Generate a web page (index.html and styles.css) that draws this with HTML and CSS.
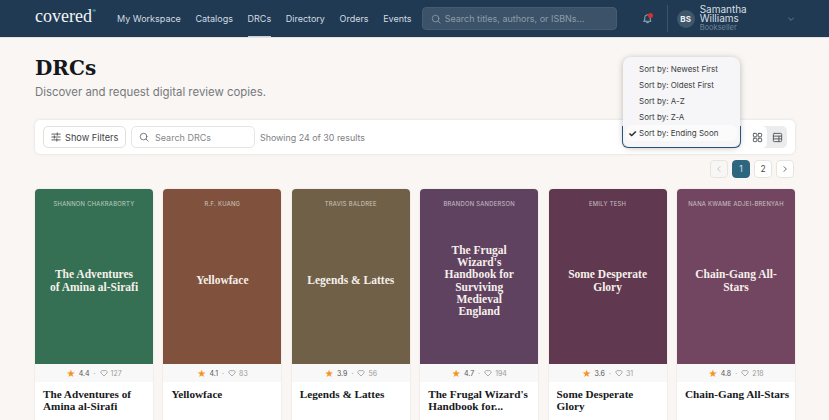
FILE: index.html
```html
<!DOCTYPE html>
<html lang="en">
<head>
<meta charset="utf-8">
<title>DRCs</title>
<link rel="stylesheet" href="styles.css">
</head>
<body>
<header class="topbar">
  <div class="logo">covered<span class="logo-mark">*</span></div>
  <nav class="nav">
    <a class="nav-item">My Workspace</a>
    <a class="nav-item">Catalogs</a>
    <a class="nav-item active">DRCs</a>
    <a class="nav-item">Directory</a>
    <a class="nav-item">Orders</a>
    <a class="nav-item">Events</a>
  </nav>
  <div class="top-search">
    <svg class="ico" width="10" height="10" viewBox="0 0 24 24"><circle cx="11" cy="11" r="8"/><path d="M17 17l5 5"/></svg>
    <span>Search titles, authors, or ISBNs...</span>
  </div>
  <div class="bell">
    <svg class="ico" width="11" height="11" viewBox="0 0 24 24"><path d="M6 16V10a6 6 0 0 1 12 0v6l2 2H4z"/><path d="M10 21h4"/></svg>
    <span class="bell-dot"></span>
  </div>
  <div class="user">
    <div class="avatar">BS</div>
    <div class="user-text">
      <div class="user-name">Samantha Williams</div>
      <div class="user-role">Bookseller</div>
    </div>
    <svg class="ico chevron" width="8" height="8" viewBox="0 0 24 24"><path d="M5 9l7 7 7-7"/></svg>
  </div>
</header>

<main class="page">
  <h1 class="title">DRCs</h1>
  <p class="subtitle">Discover and request digital review copies.</p>

  <section class="toolbar">
    <button class="btn">
      <svg class="ico" width="10" height="10" viewBox="0 0 24 24"><path d="M2 5h20M2 12h20M2 19h20M15 2v6M8 9v6M14 16v6"/></svg>
      <span>Show Filters</span>
    </button>
    <div class="search">
      <svg class="ico" width="10" height="10" viewBox="0 0 24 24"><circle cx="11" cy="11" r="8"/><path d="M17 17l5 5"/></svg>
      <span>Search DRCs</span>
    </div>
    <span class="count">Showing 24 of 30 results</span>
    <div class="sort">
      <div class="sort-menu">
        <div class="sort-option">Sort by: Newest First</div>
        <div class="sort-option">Sort by: Oldest First</div>
        <div class="sort-option">Sort by: A-Z</div>
        <div class="sort-option">Sort by: Z-A</div>
        <div class="sort-option current"><span class="check">✓</span>Sort by: Ending Soon</div>
      </div>
    </div>
    <div class="views">
      <span class="view on">
        <svg class="ico" width="11" height="11" viewBox="0 0 24 24"><rect x="3" y="3" width="7.5" height="7.5" rx="1.5"/><rect x="13.5" y="3" width="7.5" height="7.5" rx="1.5"/><rect x="3" y="13.5" width="7.5" height="7.5" rx="1.5"/><rect x="13.5" y="13.5" width="7.5" height="7.5" rx="1.5"/></svg>
      </span>
      <span class="view">
        <svg class="ico" width="11" height="11" viewBox="0 0 24 24"><rect x="3" y="3" width="18" height="18" rx="2"/><path d="M3 9h18M3 15h18M15 9v12"/></svg>
      </span>
    </div>
  </section>

  <div class="pager">
    <span class="pg muted"><svg class="ico" width="8" height="8" viewBox="0 0 24 24"><path d="M15 5l-7 7 7 7"/></svg></span>
    <span class="pg cur">1</span>
    <span class="pg">2</span>
    <span class="pg dark"><svg class="ico" width="8" height="8" viewBox="0 0 24 24"><path d="M9 5l7 7-7 7"/></svg></span>
  </div>

  <section class="grid">
    <article class="card">
      <div class="cover green"><div class="cover-author">Shannon Chakraborty</div><div class="cover-title">The Adventures<br>of Amina al-Sirafi</div></div>
      <div class="stats"><span class="star">★</span><b>4.4</b><i>·</i><svg class="heart" width="8" height="8" viewBox="0 0 24 24"><path d="M12 21l-9-9a5.5 5.5 0 0 1 9-6 5.5 5.5 0 0 1 9 6z"/></svg><em>127</em></div>
      <div class="info"><h2 class="book">The Adventures of<br>Amina al-Sirafi</h2><div class="author">Shannon Chakraborty</div></div>
    </article>
    <article class="card">
      <div class="cover brown"><div class="cover-author">R.F. Kuang</div><div class="cover-title">Yellowface</div></div>
      <div class="stats"><span class="star">★</span><b>4.1</b><i>·</i><svg class="heart" width="8" height="8" viewBox="0 0 24 24"><path d="M12 21l-9-9a5.5 5.5 0 0 1 9-6 5.5 5.5 0 0 1 9 6z"/></svg><em>83</em></div>
      <div class="info"><h2 class="book">Yellowface</h2><div class="author">R.F. Kuang</div></div>
    </article>
    <article class="card">
      <div class="cover olive"><div class="cover-author">Travis Baldree</div><div class="cover-title">Legends &amp; Lattes</div></div>
      <div class="stats"><span class="star">★</span><b>3.9</b><i>·</i><svg class="heart" width="8" height="8" viewBox="0 0 24 24"><path d="M12 21l-9-9a5.5 5.5 0 0 1 9-6 5.5 5.5 0 0 1 9 6z"/></svg><em>56</em></div>
      <div class="info"><h2 class="book">Legends &amp; Lattes</h2><div class="author">Travis Baldree</div></div>
    </article>
    <article class="card">
      <div class="cover purple"><div class="cover-author">Brandon Sanderson</div><div class="cover-title">The Frugal<br>Wizard's<br>Handbook for<br>Surviving<br>Medieval<br>England</div></div>
      <div class="stats"><span class="star">★</span><b>4.7</b><i>·</i><svg class="heart" width="8" height="8" viewBox="0 0 24 24"><path d="M12 21l-9-9a5.5 5.5 0 0 1 9-6 5.5 5.5 0 0 1 9 6z"/></svg><em>194</em></div>
      <div class="info"><h2 class="book">The Frugal Wizard's<br>Handbook for...</h2><div class="author">Brandon Sanderson</div></div>
    </article>
    <article class="card">
      <div class="cover wine"><div class="cover-author">Emily Tesh</div><div class="cover-title">Some Desperate<br>Glory</div></div>
      <div class="stats"><span class="star">★</span><b>3.6</b><i>·</i><svg class="heart" width="8" height="8" viewBox="0 0 24 24"><path d="M12 21l-9-9a5.5 5.5 0 0 1 9-6 5.5 5.5 0 0 1 9 6z"/></svg><em>31</em></div>
      <div class="info"><h2 class="book">Some Desperate<br>Glory</h2><div class="author">Emily Tesh</div></div>
    </article>
    <article class="card">
      <div class="cover plum"><div class="cover-author">Nana Kwame Adjei-Brenyah</div><div class="cover-title">Chain-Gang All-<br>Stars</div></div>
      <div class="stats"><span class="star">★</span><b>4.8</b><i>·</i><svg class="heart" width="8" height="8" viewBox="0 0 24 24"><path d="M12 21l-9-9a5.5 5.5 0 0 1 9-6 5.5 5.5 0 0 1 9 6z"/></svg><em>218</em></div>
      <div class="info"><h2 class="book">Chain-Gang All-Stars</h2><div class="author">Nana Kwame Adjei-Brenyah</div></div>
    </article>
  </section>
</main>
</body>
</html>
```

FILE: styles.css
```css
* { box-sizing: border-box; }
html, body { margin: 0; height: 420px; overflow: hidden; }
body { background: #f9f6f3; font-family: "Inter", "Liberation Sans", sans-serif; color: #2a2a2a; }
.ico { fill: none; stroke: currentColor; stroke-width: 2; stroke-linecap: round; stroke-linejoin: round; flex: none; }

.topbar { height: 37px; background: #1f3a52; display: flex; align-items: center; padding: 0 35px; color: #dfe5ea; box-shadow: 0 1px 0 #e4e2e0; }
.topbar > * { flex: none; }
.logo { font-family: "Liberation Serif", serif; font-size: 18px; color: #f4f5f5; width: 82px; position: relative; top: -2px; white-space: nowrap; }
.logo-mark { color: #3fb0b5; font-size: 9px; vertical-align: super; line-height: 0; }
.nav { display: flex; gap: 14.6px; height: 100%; }
.nav-item { font-size: 9px; color: #d4dbe1; display: flex; align-items: center; height: 100%; border-bottom: 1px solid transparent; white-space: nowrap; }
.nav-item.active { border-bottom-color: #c9d1d8; }
.top-search { margin-left: 10px; width: 195px; height: 23px; background: #3b5268; border: 1px solid #465c70; border-radius: 4px; display: flex; align-items: center; gap: 4px; padding: 0 8px; font-size: 9px; color: #8e9daa; white-space: nowrap; }
.bell { margin-left: 25px; position: relative; display: flex; color: #a9b5bf; }
.bell-dot { position: absolute; top: 0; right: 0; width: 5px; height: 5px; border-radius: 50%; background: #d8302a; }
.user { margin-left: 14px; border-left: 1px solid #3c5469; height: 27px; display: flex; align-items: center; padding-left: 9px; }
.avatar { width: 18px; height: 18px; border-radius: 50%; background: #3f566b; color: #eef1f3; font-size: 8px; font-weight: 700; display: flex; align-items: center; justify-content: center; }
.user-text { margin-left: 5px; width: 50px; padding-top: 1px; }
.user-name { font-size: 10px; line-height: 9px; color: #d9dfe4; }
.user-role { font-size: 7.5px; line-height: 10px; color: #71859a; }
.chevron { margin-left: 37px; color: #8c9bab; }

.page { padding: 18px 34px 0 35px; }
.title { margin: 0; font-family: "DejaVu Serif", serif; font-weight: 700; font-size: 20px; line-height: 26px; color: #15171a; }
.subtitle { margin: 1px 0 0; font-size: 11.4px; line-height: 20px; color: #77797c; }

.toolbar { margin-top: 18px; height: 34px; background: #fff; border-radius: 5px; box-shadow: 0 0 3px rgba(0,0,0,.12); display: flex; align-items: center; padding: 0 8px; }
.btn { height: 22px; width: 83px; background: #fff; border: 1px solid #e3e0da; border-radius: 5px; font: inherit; font-size: 9.2px; color: #3f4347; display: flex; align-items: center; gap: 4px; padding: 0 7px; white-space: nowrap; }
.search { margin-left: 5px; width: 124px; height: 22px; border: 1px solid #e8e5e0; border-radius: 5px; display: flex; align-items: center; gap: 6px; padding: 0 7px; font-size: 9px; color: #85888b; }
.search .ico { color: #60656a; }
.count { margin-left: 5px; font-size: 8.9px; color: #7d8083; }
.sort { margin-left: auto; width: 119px; height: 22px; position: relative; border: 1px solid #2f5d8c; border-top: 0; border-radius: 0 0 6px 6px; }
.sort-menu { position: absolute; left: 0; right: 0; bottom: 0; height: 90px; background: #f6f6f8; border-radius: 8px; box-shadow: 0 1px 6px rgba(0,0,0,.25); padding: 4px 3px 0; }
.sort-option { height: 16px; display: flex; align-items: center; padding-left: 13px; font-size: 8px; color: #3c3c40; position: relative; }
.sort-option.current { background: #fbfbfb; border-radius: 6px; }
.check { position: absolute; left: 2px; font-size: 10px; font-weight: 700; color: #222; }
.views { margin-left: 6px; width: 40px; height: 22px; background: #ececec; border-radius: 5px; display: flex; color: #50555a; }
.view { flex: 1; display: flex; align-items: center; justify-content: center; border-radius: 5px; }
.view.on { background: #fff; }

.pager { display: flex; justify-content: flex-end; gap: 4px; margin-top: 6px; padding-right: 1px; }
.pg { width: 18px; height: 18px; background: #fff; border: 1px solid #e8e5e0; border-radius: 4px; display: flex; align-items: center; justify-content: center; font-size: 8.5px; color: #44484c; }
.pg.muted { background: #f9f7f5; color: #aaa; }
.pg.dark { color: #222; }
.pg.cur { background: #2e6680; border-color: #2e6680; color: #d5e2e8; }

.grid { margin-top: 11px; display: grid; grid-template-columns: repeat(6, 1fr); gap: 10.4px; }
.card { background: #fff; border-radius: 4px; overflow: hidden; box-shadow: 0 0 2px rgba(0,0,0,.12); }
.cover { height: 175px; position: relative; display: flex; align-items: center; justify-content: center; padding: 0; color: #f5f0ea; }
.cover-author { position: absolute; top: 11px; left: 0; right: 0; text-align: center; font-size: 5.8px; letter-spacing: .3px; text-transform: uppercase; color: #e8e8e4; opacity: .75; white-space: nowrap; }
.cover-title { font-family: "Liberation Serif", serif; font-weight: 700; font-size: 11.5px; line-height: 12.2px; text-align: center; padding-top: 8px; }
.green { background: #367054; }
.brown { background: #80523e; }
.olive { background: #6f6047; }
.purple { background: #5f4160; }
.wine { background: #603850; }
.plum { background: #724660; }
.stats { height: 18px; background: #f8f8f8; display: flex; align-items: center; justify-content: center; gap: 3px; font-size: 7px; color: #9a9a9a; }
.stats .star { color: #f7931a; font-size: 9px; }
.stats b { font-weight: 400; color: #555; }
.stats i { font-style: normal; margin: 0 1px; }
.stats em { font-style: normal; }
.heart { fill: none; stroke: #888; stroke-width: 2; }
.info { padding: 6px 3px 0 8px; }
.book { margin: 0; font-family: "Liberation Serif", serif; font-weight: 700; font-size: 11.2px; line-height: 12.2px; height: 24.4px; color: #17191c; }
.author { margin-top: 8px; font-size: 8px; color: #888; white-space: nowrap; }
```
